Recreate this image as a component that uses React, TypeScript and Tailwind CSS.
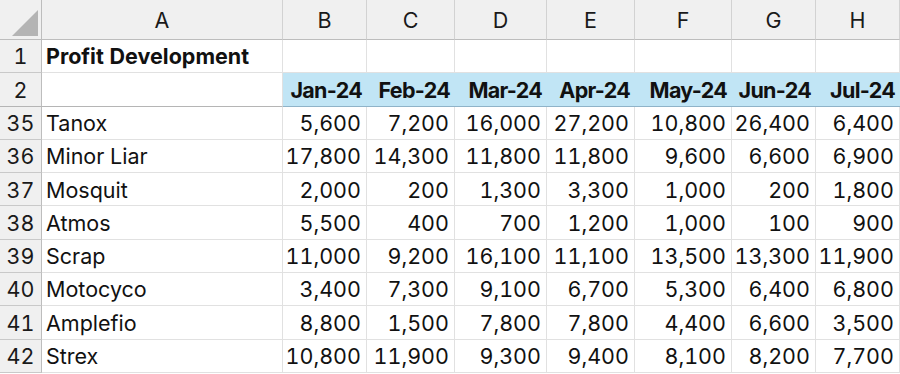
const cols = ["A", "B", "C", "D", "E", "F", "G", "H"];
const months = ["Jan-24", "Feb-24", "Mar-24", "Apr-24", "May-24", "Jun-24", "Jul-24"];

const rows: { n: number; name: string; values: string[] }[] = [
  { n: 35, name: "Tanox", values: ["5,600", "7,200", "16,000", "27,200", "10,800", "26,400", "6,400"] },
  { n: 36, name: "Minor Liar", values: ["17,800", "14,300", "11,800", "11,800", "9,600", "6,600", "6,900"] },
  { n: 37, name: "Mosquit", values: ["2,000", "200", "1,300", "3,300", "1,000", "200", "1,800"] },
  { n: 38, name: "Atmos", values: ["5,500", "400", "700", "1,200", "1,000", "100", "900"] },
  { n: 39, name: "Scrap", values: ["11,000", "9,200", "16,100", "11,100", "13,500", "13,300", "11,900"] },
  { n: 40, name: "Motocyco", values: ["3,400", "7,300", "9,100", "6,700", "5,300", "6,400", "6,800"] },
  { n: 41, name: "Amplefio", values: ["8,800", "1,500", "7,800", "7,800", "4,400", "6,600", "3,500"] },
  { n: 42, name: "Strex", values: ["10,800", "11,900", "9,300", "9,400", "8,100", "8,200", "7,700"] },
];

const head = "flex items-center justify-center bg-[#f0f0f0] border-r border-b border-[#d2d2d2] text-[#1a1a1a]";
const rowHead = "flex items-center justify-center bg-[#f0f0f0] border-r border-b border-[#c9c9c9] border-r-[#bdbdbd] text-[#1a1a1a] pt-[2px]";
const cell = "flex items-center border-r border-b border-[#e1e1e1] text-[#111] pt-[2px]";

export default function App() {
  return (
    <div className="w-[900px] h-[374px] overflow-hidden bg-white font-['Inter',sans-serif] text-[21.5px] leading-none tabular-nums">
      <div className="grid grid-cols-[42px_241px_84px_88px_92px_88px_97px_84px_84px] grid-rows-[40px_repeat(10,33.3px)]">
        <div className="relative bg-[#f0f0f0] border-r border-b border-[#bdbdbd]">
          <svg className="absolute left-0 top-0" width="41" height="39" viewBox="0 0 41 39">
            <polygon points="12,36 38,36 38,10" fill="#b4b4b4" />
          </svg>
        </div>
        {cols.map((c) => (
          <div key={c} className={`${head} border-b-[#bdbdbd] pt-[2px]`}>
            {c}
          </div>
        ))}

        <div className={rowHead}>1</div>
        <div className={`${cell} pl-[4px] font-bold`}>Profit Development</div>
        {months.map((m) => (
          <div key={m} className={cell} />
        ))}

        <div className={`${rowHead} border-b-[#b5b5b5]`}>2</div>
        <div className={`${cell} border-b-[#b5b5b5]`} />
        {months.map((m) => (
          <div key={m} className="flex items-center justify-end pr-[5px] pt-[2px] bg-[#c1e5f5] border-b border-[#8fb3c8] font-bold normal-nums tracking-[-0.7px] text-[#111]">
            {m}
          </div>
        ))}

        {rows.map((r) => (
          <Row key={r.n} n={r.n} name={r.name} values={r.values} />
        ))}
      </div>
    </div>
  );
}

function Row({ n, name, values }: { n: number; name: string; values: string[] }) {
  return (
    <>
      <div className={rowHead}>{n}</div>
      <div className={`${cell} pl-[4px]`}>{name}</div>
      {values.map((v, i) => (
        <div key={i} className={`${cell} justify-end pr-[5px]`}>
          {v}
        </div>
      ))}
    </>
  );
}
